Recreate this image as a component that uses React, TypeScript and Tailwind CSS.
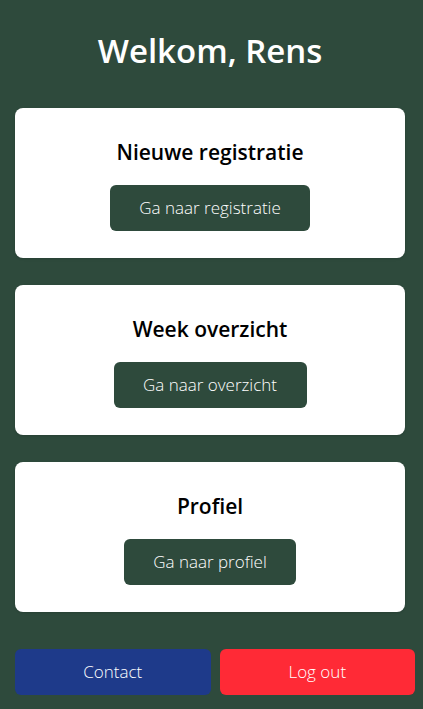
export default function App() {
  const cards = [
    { title: 'Nieuwe registratie', button: 'Ga naar registratie', width: 'w-[200px]' },
    { title: 'Week overzicht', button: 'Ga naar overzicht', width: 'w-[193px]' },
    { title: 'Profiel', button: 'Ga naar profiel', width: 'w-[172px]' },
  ]

  return (
    <div
      className="min-h-screen bg-[#2e4a3c] pl-[15px] pr-[8px] pt-[28px]"
      style={{ fontFamily: '"Open Sans", "Noto Sans", sans-serif' }}
    >
      <h1 className="text-center text-[33px] leading-[46px] font-semibold text-white pr-[10px]">
        Welkom, Rens
      </h1>

      <div className="flex flex-col gap-[27px] mt-[34px] mr-[10px]">
        {cards.map((card) => (
          <div
            key={card.title}
            className="h-[150px] bg-white rounded-[8px] shadow-sm flex flex-col items-center pt-[29px]"
          >
            <h2 className="text-[21px] leading-[30px] font-semibold text-black">{card.title}</h2>
            <button
              className={`${card.width} h-[46px] mt-[18px] bg-[#2e4a3c] rounded-[6px] text-white text-[17px] font-light`}
            >
              {card.button}
            </button>
          </div>
        ))}
      </div>

      {/* Bottom actions */}
      <div className="flex gap-[9px] mt-[37px]">
        <button className="flex-1 h-[46px] bg-[#1e3a8a] rounded-[6px] text-white text-[17px] font-light">
          Contact
        </button>
        <button className="flex-1 h-[46px] bg-[#ff2a36] rounded-[6px] text-white text-[17px] font-light">
          Log out
        </button>
      </div>
    </div>
  )
}
